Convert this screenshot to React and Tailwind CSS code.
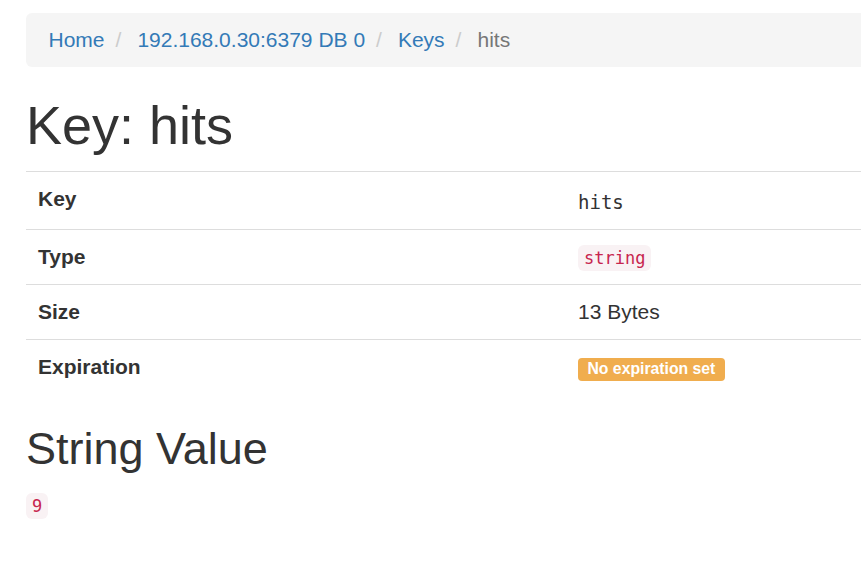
export default function App() {
  const rows = [
    { label: "Key", value: <span className="font-['DejaVu_Sans_Mono',monospace] text-[19px] leading-[20px]">hits</span>, first: true },
    {
      label: "Type",
      value: (
        <code className="font-['DejaVu_Sans_Mono',monospace] text-[17px] leading-[20px] text-[#c7254e] bg-[#f9f2f4] rounded-[6px] px-[6px] py-[3px]">
          string
        </code>
      ),
    },
    { label: "Size", value: "13 Bytes" },
    {
      label: "Expiration",
      value: (
        <span className="inline-block leading-none text-[15.75px] font-bold text-white bg-[#f0ad4e] rounded-[4px] pl-[9.5px] pr-[9.5px] pt-[3.2px] pb-[4.7px]">
          No expiration set
        </span>
      ),
    },
  ];

  return (
    <div className="min-h-screen bg-white overflow-hidden font-['Liberation_Sans',Arial,sans-serif] text-[#333] text-[21px] leading-[30px]">
      <div className="ml-[26px] w-[1080px] pt-[13px]">
        {/* Breadcrumb */}
        <ol className="flex items-center bg-[#f5f5f5] rounded-[6px] px-[22.5px] py-[12px] h-[54px]">
          <li><a className="text-[#337ab7]">Home</a></li>
          <li className="text-[#ccc] ml-[11px] mr-[16px]">/</li>
          <li><a className="text-[#337ab7]">192.168.0.30:6379 DB 0</a></li>
          <li className="text-[#ccc] ml-[11px] mr-[16px]">/</li>
          <li><a className="text-[#337ab7]">Keys</a></li>
          <li className="text-[#ccc] ml-[11px] mr-[16px]">/</li>
          <li className="text-[#777]">hits</li>
        </ol>

        <h1 className="text-[54px] h-[59px] leading-[59px] mt-[29px] mb-[16px]">Key: hits</h1>

        {/* Key info */}
        <table className="table-fixed border-collapse w-[1080px]">
          <tbody>
            {rows.map((r) => (
              <tr key={r.label} className="border-t border-[#ddd]">
                <th className="w-[540px] text-left align-top font-bold px-[12px] pt-[12px] pb-[12px]">
                  {r.label}
                </th>
                <td className={`align-top px-[12px] pb-[12px] ${r.first ? "pt-[15px]" : "pt-[12px]"}`}>
                  {r.value}
                </td>
              </tr>
            ))}
          </tbody>
        </table>

        <h2 className="text-[45px] leading-[49.5px] mt-[30px] mb-[16px]">String Value</h2>
        <div>
          <code className="font-['DejaVu_Sans_Mono',monospace] text-[17px] leading-[20px] text-[#c7254e] bg-[#f9f2f4] rounded-[6px] px-[6px] py-[3px]">
            9
          </code>
        </div>
      </div>
    </div>
  );
}
